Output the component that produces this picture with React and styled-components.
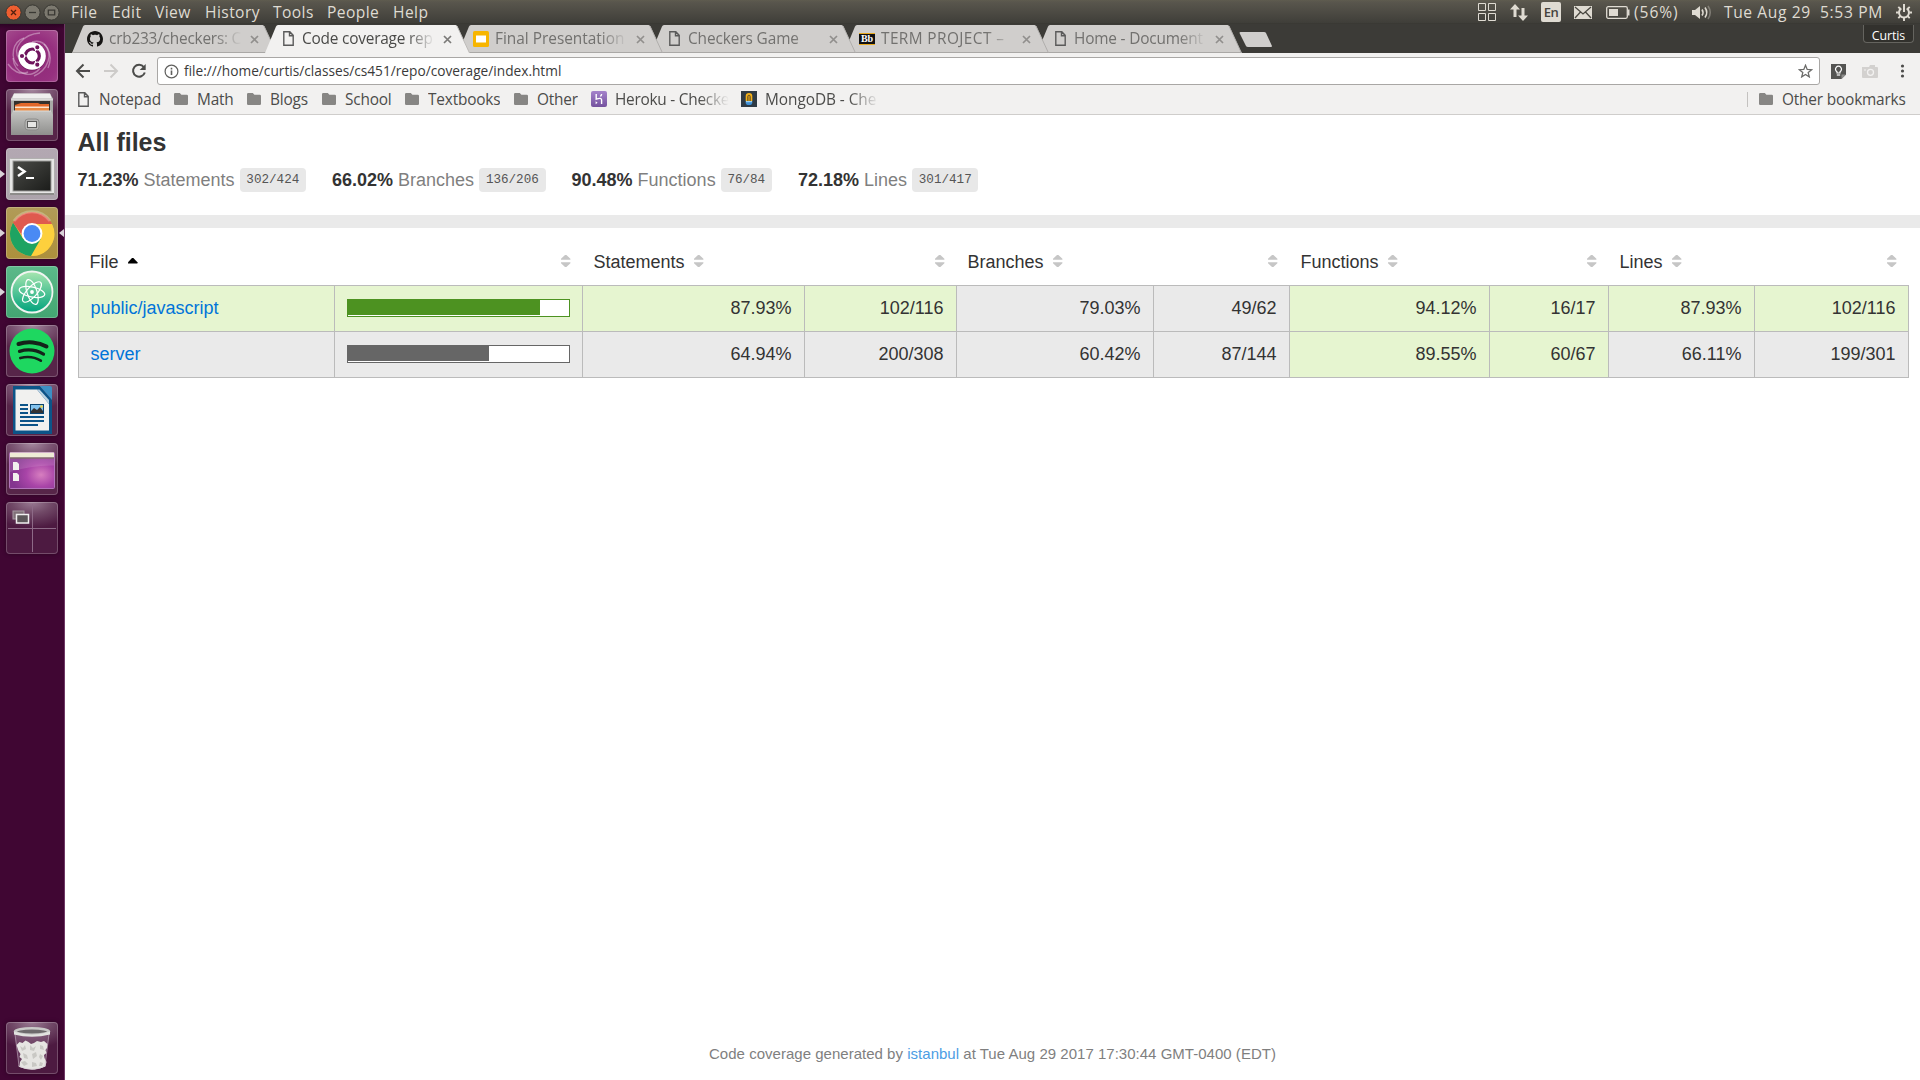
import React from "react";
import styled, { createGlobalStyle, css } from "styled-components";

const ui = `"Open Sans", "Noto Sans", sans-serif`;

const GlobalStyle = createGlobalStyle`
  html, body { margin: 0; padding: 0; background: #fff; }
  *, *::before, *::after { box-sizing: border-box; }
  svg { display: block; flex: none; }
`;

const Desktop = styled.div`
  width: 1920px;
  height: 1080px;
  overflow: hidden;
  display: flex;
  flex-direction: column;
  font-family: ${ui};
`;

/* ---------- top panel ---------- */
const Panel = styled.header`
  height: 24px;
  flex: none;
  display: flex;
  align-items: center;
  background: linear-gradient(#5f5c4f 0, #59564d 2px, #3f3e39 23px, #35342f 24px);
  color: #dfdbd2;
  font-size: 15.6px;
  line-height: 24px;
  white-space: pre;
`;
const WindowButtons = styled.div`
  display: flex;
  gap: 2px;
  width: 71px;
  padding-left: 5px;
`;
const PanelItem = styled.span`
  width: ${(p) => p.$w}px;
  letter-spacing: ${(p) => p.$ls ?? 0.42}px;
  flex: none;
`;
const PanelSpacer = styled.div`
  flex: 1;
`;
const PanelIcon = styled.span`
  width: ${(p) => p.$w}px;
  flex: none;
  display: flex;
  align-items: center;
`;
const Keyboard = styled.span`
  width: 20px;
  height: 20px;
  border-radius: 2px;
  background: #dfdbd2;
  color: #45433d;
  font-size: 13px;
  font-weight: 600;
  line-height: 21px;
  text-align: center;
  letter-spacing: -0.6px;
`;

/* ---------- launcher ---------- */
const Body = styled.div`
  flex: 1;
  display: flex;
  min-height: 0;
`;
const Launcher = styled.nav`
  width: 65px;
  flex: none;
  display: flex;
  flex-direction: column;
  gap: 7px;
  padding: 6px 0;
  background: linear-gradient(#2c0324 0, #400633 5px, #400633 100%);
  border-right: 1px solid #6f3865;
`;
const LauncherRow = styled.div`
  display: flex;
  align-items: center;
  height: 52px;
  flex: none;
  ${(p) => p.$last && css`margin-top: auto;`}
`;
const Pip = styled.span`
  width: 5px;
  height: 8px;
  margin-right: ${(p) => (p.$right ? 0 : 1)}px;
  margin-left: ${(p) => (p.$right ? 1 : 0)}px;
  background: ${(p) => (p.$on ? "#d9d2d8" : "transparent")};
  clip-path: ${(p) =>
    p.$right ? "polygon(100% 0, 0 50%, 100% 100%)" : "polygon(0 0, 100% 50%, 0 100%)"};
`;
const Tile = styled.div`
  width: 52px;
  height: 52px;
  border-radius: 4px;
  overflow: hidden;
  background: ${(p) => p.$bg || "radial-gradient(ellipse 42px 26px at 50% 0, #a68aa0 0, #7c5674 45%, #572549 100%)"};
  box-shadow: inset 0 0 0 1px rgba(255, 255, 255, 0.22), 0 0 4px rgba(0, 0, 0, 0.35);
`;

/* ---------- browser ---------- */
const Browser = styled.main`
  flex: 1;
  min-width: 0;
  display: flex;
  flex-direction: column;
  background: #fff;
`;
const TabStrip = styled.div`
  height: 29px;
  flex: none;
  display: flex;
  padding: 1px 6px 0 7px;
  background: #3c3b37;
  position: relative;
`;
const TabBox = styled.div`
  position: relative;
  z-index: ${(p) => p.$z};
  width: 205px;
  height: 28px;
  margin-right: -12px;
  padding: 0 14px 0 15px;
  flex: none;
  display: flex;
  align-items: center;
`;
const TabShape = styled.svg`
  position: absolute;
  inset: 0;
`;
const TabIcon = styled.span`
  position: relative;
  width: 16px;
  height: 16px;
  margin-right: 6px;
  display: flex;
  justify-content: center;
`;
const TabTitle = styled.span`
  position: relative;
  width: 133px;
  height: 27px;
  line-height: 25px;
  font-size: 15.4px;
  letter-spacing: ${(p) => p.$ls ?? -0.3}px;
  overflow: hidden;
  white-space: pre;
  color: ${(p) => (p.$active ? "#4a4a48" : "#72716f")};
  mask-image: linear-gradient(90deg, #000 105px, transparent 133px);
`;
const TabClose = styled.svg`
  position: relative;
  margin-left: 7.5px;
`;
const NewTab = styled.svg`
  margin: 7px 0 0 9px;
`;
const Profile = styled.div`
  margin-left: auto;
  width: 51px;
  height: 18px;
  border: 1px solid #65645f;
  border-top: 0;
  border-radius: 0 0 4px 4px;
  background: #32312d;
  color: #fff;
  font-size: 12.4px;
  line-height: 21px;
  text-align: center;
  letter-spacing: -0.1px;
`;
const Toolbar = styled.div`
  height: 33px;
  flex: none;
  display: flex;
  align-items: center;
  padding: 3px 0 0 10px;
  background: #f2f1f0;
`;
const NavButton = styled.span`
  width: ${(p) => p.$w ?? 28}px;
  display: flex;
`;
const Omnibox = styled.div`
  width: 1663px;
  height: 28px;
  display: flex;
  align-items: center;
  border: 1px solid #a9a7a5;
  border-radius: 3px;
  background: #fff;
  padding: 0 6px;
`;
const Url = styled.span`
  flex: 1;
  margin-left: 5px;
  font-size: 13.7px;
  line-height: 24px;
  letter-spacing: 0;
  color: #3a3a3a;
`;
const Extensions = styled.div`
  display: flex;
  align-items: center;
  padding-left: 11px;
`;
const Bookmarks = styled.div`
  height: 29px;
  flex: none;
  display: flex;
  align-items: center;
  padding: 0 14px 2px 13px;
  background: #f2f1f0;
  border-bottom: 1px solid #cfcdcb;
`;
const Bookmark = styled.span`
  width: ${(p) => p.$w}px;
  flex: none;
  display: flex;
  align-items: center;
  gap: ${(p) => p.$gap ?? 9}px;
`;
const BookmarkText = styled.span`
  font-size: 15.4px;
  height: 24px;
  line-height: 25px;
  letter-spacing: ${(p) => p.$ls ?? -0.18}px;
  color: #4c4c4a;
  white-space: pre;
  overflow: hidden;
  ${(p) =>
    p.$fade &&
    css`
      width: 114px;
      mask-image: linear-gradient(90deg, #000 84px, transparent 114px);
    `}
`;
const BookmarkDivider = styled.span`
  width: 1px;
  height: 15px;
  margin: 0 11px 0 auto;
  background: #c4c2c0;
`;

/* ---------- coverage report ---------- */
const Page = styled.article`
  flex: 1;
  display: flex;
  flex-direction: column;
  font-family: "Liberation Sans", Arial, sans-serif;
  font-size: 18px;
  line-height: 22px;
  color: #333;
`;
const Summary = styled.section`
  height: 100px;
  padding: 13px 12.5px;
`;
const Title = styled.h1`
  margin: 0;
  font-size: 25px;
  line-height: 29px;
  font-weight: 700;
`;
const Metrics = styled.div`
  display: flex;
  gap: 26px;
  margin-top: 11px;
`;
const Metric = styled.div`
  display: flex;
  align-items: center;
  gap: 5px;
  height: 24px;
`;
const Quiet = styled.span`
  color: #7f7f7f;
`;
const Fraction = styled.span`
  height: 24px;
  padding: 0 6.75px;
  border-radius: 4px;
  background: #e8e8e8;
  color: #555;
  font: 12.6px/25px "Liberation Mono", monospace;
`;
const StatusLine = styled.div`
  height: 13px;
  background: #eaeaea;
`;
const CoverageTable = styled.table`
  width: 1831px;
  margin: 10px 0 0 13px;
  table-layout: fixed;
  border-collapse: separate;
  border-spacing: 0;
`;
const HeadCell = styled.th`
  height: 48px;
  padding: ${(p) => (p.$tail ? "0 11.5px 1px 0" : "0 0 1px 11.5px")};
  border-bottom: 1px solid #bbb;
  font-weight: 400;
  text-align: left;
  &:last-child {
    padding-right: 12.5px;
  }
`;
const HeadInner = styled.div`
  display: flex;
  align-items: center;
  justify-content: ${(p) => (p.$tail ? "flex-end" : "flex-start")};
  gap: 9px;
`;
const HeadLabel = styled.span`
  padding-top: 1px;
  margin-bottom: -1px;
`;
const levels = { high: "#e6f5d0", medium: "#eaeaea" };
const Cell = styled.td`
  height: 46px;
  padding: 0 12.5px 2px 11.5px;
  text-align: ${(p) => (p.$left ? "left" : "right")};
  background: ${(p) => levels[p.$level]};
  border: solid #bbb;
  border-width: 0 0 1px 1px;
  ${(p) =>
    p.$chart &&
    css`
      padding: 0 12px 1px;
    `}
  &:last-child {
    border-right-width: 1px;
  }
`;
const FileLink = styled.a`
  color: ${(p) => (p.$soft ? "#4c9de4" : "#0074d9")};
`;
const Bar = styled.div`
  height: 18px;
  border: 1px solid ${(p) => p.$color};
  background: #fff;
`;
const BarFill = styled.div`
  height: 15px;
  background: ${(p) => p.$color};
`;
const Footer = styled.footer`
  margin-top: auto;
  height: 53px;
  padding-top: 16px;
  text-align: center;
  font-size: 15px;
  line-height: 22px;
  letter-spacing: 0.02px;
  color: #7f7f7f;
`;

/* ---------- drawings ---------- */
const WinButton = ({ kind }) => (
  <svg width="17" height="17" viewBox="0 0 17 17">
    <circle cx="8.5" cy="8.5" r="7.6" fill={kind === "x" ? "#ee5e30" : "#7c796f"} stroke="#3a3934" strokeWidth="1" />
    <g stroke={kind === "x" ? "#53200f" : "#3a3934"} strokeWidth="1.3" fill="none">
      {kind === "x" && <path d="M6 6l5 5M11 6l-5 5" />}
      {kind === "min" && <path d="M5 8.5h7" />}
      {kind === "max" && <path d="M5.3 6.2h6.4v4.6H5.3z" />}
    </g>
  </svg>
);

const DocIcon = () => (
  <svg width="11" height="15" viewBox="0 0 11 15">
    <path d="M.8.8h6l3.4 3.6v9.8H.8zM6.5.8v4h3.7" fill="none" stroke="#5a5a5a" strokeWidth="1.4" />
  </svg>
);
const Folder = () => (
  <svg width="14" height="12" viewBox="0 0 14 12">
    <path d="M1.2 0h4.6l1.6 1.8h5.4Q14 1.8 14 3v7.8Q14 12 12.8 12H1.2Q0 12 0 10.8V1.2Q0 0 1.2 0z" fill="#878684" />
  </svg>
);
const Github = () => (
  <svg width="16" height="16" viewBox="0 0 16 16">
    <path
      fill="#161514"
      d="M8 0C3.58 0 0 3.58 0 8c0 3.54 2.29 6.53 5.47 7.59.4.07.55-.17.55-.38 0-.19-.01-.82-.01-1.49-2.01.37-2.53-.49-2.69-.94-.09-.23-.48-.94-.82-1.13-.28-.15-.68-.52-.01-.53.63-.01 1.08.58 1.23.82.72 1.21 1.87.87 2.33.66.07-.52.28-.87.51-1.07-1.78-.2-3.64-.89-3.64-3.95 0-.87.31-1.59.82-2.15-.08-.2-.36-1.02.08-2.12 0 0 .67-.21 2.2.82.64-.18 1.32-.27 2-.27s1.36.09 2 .27c1.53-1.04 2.2-.82 2.2-.82.44 1.1.16 1.92.08 2.12.51.56.82 1.27.82 2.15 0 3.07-1.87 3.75-3.65 3.95.29.25.54.73.54 1.48 0 1.07-.01 1.93-.01 2.2 0 .21.15.46.55.38A8.01 8.01 0 0 0 16 8c0-4.42-3.58-8-8-8z"
    />
  </svg>
);
const Slides = () => (
  <svg width="16" height="16" viewBox="0 0 16 16">
    <rect width="16" height="16" rx="1.6" fill="#f7b500" />
    <rect x="3" y="4.5" width="10" height="7" fill="#fff" />
  </svg>
);
const BbBadge = styled.span`
  width: 16px;
  height: 12px;
  margin-top: 2px;
  background: #111;
  border: solid #e8a81c;
  border-width: 1px 0 1px 0;
  color: #fff;
  font: 700 10px/10px "Liberation Serif", serif;
  letter-spacing: -0.2px;
  text-align: center;
`;

const HerokuIcon = () => (
  <svg width="16" height="16" viewBox="0 0 16 16">
    <defs>
      <linearGradient id="hk" x1="0" y1="0" x2="0" y2="1">
        <stop offset="0" stopColor="#a583cb" />
        <stop offset="1" stopColor="#74529e" />
      </linearGradient>
    </defs>
    <rect width="16" height="16" rx="2" fill="url(#hk)" />
    <path d="M5.2 3v5.2c3.6-1.3 5.4-1.1 5.4.8V13M10.6 3c0 1-.5 1.8-1.2 2.4" fill="none" stroke="#fff" strokeWidth="1.4" />
    <path d="M4.6 10.2l2 1.5-2 1.5z" fill="#fff" />
  </svg>
);
const MongoIcon = () => (
  <svg width="16" height="16" viewBox="0 0 16 16">
    <rect width="16" height="16" fill="#2f3b45" />
    <path d="M4.7 10V5.3a3.3 3.3 0 0 1 6.6 0V10z" fill="#f5b21a" />
    <path d="M6.6 10V5.6a1.4 1.4 0 0 1 2.8 0V10M8 4.5V10" fill="none" stroke="#4a3d22" strokeWidth=".7" />
    <path d="M4.7 10h6.6v1.4a3.3 2.6 0 0 1-6.6 0z" fill="#3f8fd4" />
    <path d="M5 10h6v1.2H5z" fill="#9ed0f0" />
  </svg>
);

const Sorter = ({ up }) => (
  <svg width="10" height="12" viewBox="0 0 10 12">
    {up ? (
      <path d="M0 8.4V7.3L4 3h1.4L9.4 7.3v1.1z" fill="#000" />
    ) : (
      <path d="M0 4.8v-1L4 0h1.4L9.4 3.8v1zM0 7.2v1L4 12h1.4l4-3.8v-1z" fill="#c6c6c6" />
    )}
  </svg>
);

const Art = ({ children }) => (
  <svg width="52" height="52" viewBox="0 0 52 52">
    {children}
  </svg>
);
const UbuntuArt = () => (
  <Art>
    <g fill="none" stroke="#fff" strokeOpacity=".35" strokeWidth="1.4">
      <path d="M26 12C40 8 48 24 42 38" />
      <path d="M14 30C4 18 18 4 34 3" />
      <path d="M34 38C26 50 8 44 7 28" />
      <path d="M38 14c10 10 4 26-10 32" />
      <path d="M12 36C4 28 6 12 18 8" />
      <path d="M22 42C14 46 6 40 2 34" />
    </g>
    <circle cx="26" cy="26.5" r="14.2" fill="#561048" opacity=".4" />
    <circle cx="26" cy="26" r="13.8" fill="#fff" />
    <circle cx="26.3" cy="26" r="7" fill="none" stroke="#6f145d" strokeWidth="3.2" />
    <g stroke="#fff" strokeWidth="1.2" fill="#6f145d">
      <path d="M26.3 26L14 26M26.3 26L32.5 15.3M26.3 26L32.5 36.7" strokeWidth="1" />
      <circle cx="26.3" cy="26" r="4.8" fill="#fff" stroke="none" />
      <circle cx="16" cy="26" r="2.7" />
      <circle cx="31.3" cy="17.3" r="2.7" />
      <circle cx="31.3" cy="34.7" r="2.7" />
    </g>
  </Art>
);
const FilesArt = () => (
  <Art>
    <defs>
      <linearGradient id="fl" x1="0" y1="0" x2="0" y2="1">
        <stop offset="0" stopColor="#c4c4c2" />
        <stop offset="1" stopColor="#8f8f8d" />
      </linearGradient>
    </defs>
    <path d="M8 4.5h36l3 5v34H5v-34z" fill="#a9a9a7" />
    <path d="M8 4.5h36l2 5H6z" fill="#efefee" />
    <path d="M5 9.5h42v2H5z" fill="#dadad9" />
    <path d="M8 12h36v10H8z" fill="#33302e" />
    <path d="M9 16l6-2h17l2 1h9v7H9z" fill="#e2672a" />
    <path d="M9 17.5h34V19H9z" fill="#fbe3cf" />
    <path d="M9 19h34v3H9z" fill="#e98943" />
    <path d="M7 22h38l2 4v20H5V26z" fill="url(#fl)" />
    <path d="M7 22h38" stroke="#dcdcda" />
    <rect x="19" y="30" width="14" height="11" rx="3" fill="#b5b5b3" stroke="#8c8c8a" />
    <rect x="21.5" y="32.5" width="9" height="6" fill="#e6e6e4" stroke="#5d5d5b" />
  </Art>
);
const TerminalArt = () => (
  <Art>
    <defs>
      <linearGradient id="tm" x1="0" y1="0" x2="1" y2="1">
        <stop offset="0" stopColor="#4b4c48" />
        <stop offset="1" stopColor="#1b1c1a" />
      </linearGradient>
    </defs>
    <rect x="3.5" y="10.5" width="45" height="36" rx="1" fill="#e6e6e5" stroke="#b1b0af" />
    <path d="M4 46h44" stroke="#8d8c8a" strokeWidth="2" />
    <rect x="7" y="13" width="38" height="30" fill="url(#tm)" stroke="#9a9a98" />
    <path d="M12 19l6.5 4.5L12 28" fill="none" stroke="#fff" strokeWidth="2.5" />
    <path d="M20 30h8" stroke="#fff" strokeWidth="2" />
  </Art>
);
const ChromeArt = () => (
  <Art>
    <circle cx="26" cy="27" r="22" fill="#fc3" />
    <path d="M26 17h20a22 22 0 0 1-21 31.8L34.7 32z" fill="#fdd03d" />
    <path d="M7.2 15.6A22 22 0 0 0 25 49l9.7-17-17.5 0z" fill="#1ea362" />
    <path d="M16.5 29L7 15.8C10 10.5 17 5 26 5c9 0 17 5 20 12H26z" fill="#df5a4e" />
    <circle cx="26" cy="26.5" r="10.4" fill="#fff" />
    <circle cx="26" cy="26.5" r="8.4" fill="#4a8af4" />
    <path d="M8 14a22 22 0 0 1 36 0" fill="none" stroke="#fff" strokeOpacity=".25" strokeWidth="3" />
  </Art>
);
const AtomArt = () => (
  <Art>
    <defs>
      <linearGradient id="at" x1="0" y1="0" x2="0" y2="1">
        <stop offset="0" stopColor="#a8e6b0" />
        <stop offset="1" stopColor="#00a37c" />
      </linearGradient>
    </defs>
    <circle cx="26" cy="26" r="20.5" fill="url(#at)" stroke="#f1f5f1" strokeWidth="1.8" />
    <g fill="none" stroke="#fff" strokeWidth="1.2">
      <ellipse cx="26" cy="26" rx="13" ry="5" transform="rotate(12 26 26)" />
      <ellipse cx="26" cy="26" rx="13" ry="5" transform="rotate(72 26 26)" />
      <ellipse cx="26" cy="26" rx="13" ry="5" transform="rotate(132 26 26)" />
    </g>
    <circle cx="26" cy="26" r="1.9" fill="#fff" />
  </Art>
);
const SpotifyArt = () => (
  <Art>
    <circle cx="26" cy="26" r="22.5" fill="#1ed760" />
    <g fill="none" stroke="#14241a" strokeLinecap="round">
      <path d="M12.5 19c9-3 20-2 28 2.5" strokeWidth="4" />
      <path d="M13.5 26.3c8-2.3 17-1.3 24 2.8" strokeWidth="3.3" />
      <path d="M14.3 33c7-1.8 14.5-1 20.5 2.7" strokeWidth="2.7" />
    </g>
  </Art>
);
const WriterArt = () => (
  <Art>
    <path d="M7 2h27l12 14v34H7z" fill="#0c5488" />
    <path d="M34 2h10q2 0 2 2v12z" fill="#3d8fc4" />
    <path d="M9.5 5.5h21.5l12 14.5v26.5H9.5z" fill="#f1f1ef" />
    <path d="M31 5.5l12 14.5V16L33.5 5.5z" fill="#bdd3e2" />
    <path d="M14 21h8M14 25h8M14 29h8M14 33h24M14 37h24M14 41h18" stroke="#0c5488" strokeWidth="2" />
    <rect x="24.5" y="20.5" width="13" height="9" fill="#83c3ee" stroke="#0c4470" />
    <path d="M25 29v-2l3-3 3 2 3-3 3 4v2z" fill="#333" />
    <circle cx="35.5" cy="22.5" r="1.3" fill="#f5d33c" />
  </Art>
);
const DesktopArt = () => (
  <Art>
    <defs>
      <radialGradient id="dk" cx=".7" cy=".62" r=".65">
        <stop offset="0" stopColor="#d77fc0" />
        <stop offset=".5" stopColor="#a945a8" />
        <stop offset="1" stopColor="#84358f" />
      </radialGradient>
    </defs>
    <rect x="3.5" y="9.5" width="45" height="36" rx="1" fill="url(#dk)" stroke="#b274bb" />
    <path d="M4 15.5h44v7Q26 22 4 29z" fill="#fff" opacity=".12" />
    <path d="M4 9.5h44v5H4z" fill="#eeecd6" />
    <path d="M4 15h44" stroke="#7b8058" />
    <path d="M7 19h4l2 2v6H7zM7 30h4l2 2v6H7z" fill="#f1f0ee" />
  </Art>
);
const WorkspacesArt = () => (
  <Art>
    <path d="M26.5 2v48M2 26.5h48" stroke="#8d6a87" />
    <rect x="7" y="9" width="11" height="8" fill="#807078" stroke="#a79aa3" />
    <rect x="10.5" y="12.5" width="12" height="8.5" fill="#5c5659" stroke="#f0eeef" strokeWidth="1.5" />
  </Art>
);
const TrashArt = () => (
  <Art>
    <path d="M8.5 9L13 44.5Q26 49 39 44.5L43.5 9z" fill="#a98aa4" opacity=".3" />
    <path
      d="M10.5 23l3-3 3 1 3-2.5 3 1.5 2.5 2 3-1 3-2 4 1 3-1 3.5 3-.5 4-1.5 2 1 3-2.5 2 .5 3 2 4-1 4-4 2-7 1.500-8-.5-7-2 .5-5 2-3-2.500-2 1-3-2-3z"
      fill="#e6e5e2"
    />
    <g fill="#c9c8c4">
      <path d="M14 24l3 2 2-3 1 4-4 2zM24 23l3 3 3-2-2 5-4-1zM34 23l3 1 1 4-4-1z" />
      <path d="M17 31l4 2 1 4-4-1zM26 32l4-2 1 4-4 3zM34 32l3 2-2 4-2-3z" />
      <path d="M15 40l4-1 3 3-4 2zM26 40l4 1 1 3-5 1zM34 40l3 1-1 3-3 0z" />
    </g>
    <path d="M12.5 44Q26 50.5 39.5 44" fill="none" stroke="#dcd6da" />
    <path d="M9 12L13 44M43 12L39 44" stroke="#c6b4c3" strokeOpacity=".6" />
    <ellipse cx="26" cy="9.5" rx="17" ry="3.3" fill="#6e6a6c" stroke="#c9c9c7" strokeWidth="2.6" />
    <path d="M8 9.5v3Q26 17 44 12.5v-3Q26 16 8 9.5z" fill="#e2e2df" />
  </Art>
);

/* ---------- data ---------- */
const darkTile = "radial-gradient(ellipse 44px 26px at 50% 0, #9a7b93 0, #714967 45%, #4d1a41 100%)";
const launcher = [
  { art: UbuntuArt, bg: "radial-gradient(circle at 50% 60%, #8e2a77 0, #96307f 60%, #a54d8e 100%)" },
  { art: FilesArt },
  { art: TerminalArt, left: true, bg: "linear-gradient(#b3a8b2, #aca3ab)" },
  { art: ChromeArt, left: true, right: true, bg: "linear-gradient(#b19b58, #ac903c)" },
  { art: AtomArt, left: true, bg: "linear-gradient(#5cb98a, #43a672)" },
  { art: SpotifyArt },
  { art: WriterArt },
  { art: DesktopArt },
  { art: WorkspacesArt, bg: darkTile },
  { art: TrashArt, last: true, bg: darkTile },
];
const menus = [["File", 41], ["Edit", 43], ["View", 50], ["History", 68], ["Tools", 54], ["People", 66], ["Help", 60]];
const tabs = [
  { title: "crb233/checkers: C", icon: Github, ls: -0.22 },
  { title: "Code coverage rep", icon: DocIcon, active: true, ls: -0.2 },
  { title: "Final Presentation", icon: Slides, ls: 0 },
  { title: "Checkers Game", icon: DocIcon, ls: -0.1 },
  { title: "TERM PROJECT –", icon: () => <BbBadge>Bb</BbBadge>, ls: 0.4 },
  { title: "Home - Document", icon: DocIcon, ls: -0.18 },
];
const folders = [["Math", 73], ["Blogs", 75], ["School", 83], ["Textbooks", 109], ["Other", 77]];
const metrics = [
  ["71.23%", "Statements", "302/424"],
  ["66.02%", "Branches", "136/206"],
  ["90.48%", "Functions", "76/84"],
  ["72.18%", "Lines", "301/417"],
];
const columns = [256, 248, 222, 152, 197, 136, 200, 119, 146, 155];
const headings = ["File", null, "Statements", null, "Branches", null, "Functions", null, "Lines", null];
const rows = [
  {
    file: "public/javascript", level: "high", color: "#4d9221", covered: 87,
    cells: [["87.93%", "high"], ["102/116", "high"], ["79.03%", "medium"], ["49/62", "medium"],
      ["94.12%", "high"], ["16/17", "high"], ["87.93%", "high"], ["102/116", "high"]],
  },
  {
    file: "server", level: "medium", color: "#666", covered: 64,
    cells: [["64.94%", "medium"], ["200/308", "medium"], ["60.42%", "medium"], ["87/144", "medium"],
      ["89.55%", "high"], ["60/67", "high"], ["66.11%", "medium"], ["199/301", "medium"]],
  },
];

const Tab = ({ title, icon: Icon, active, z, ls }) => (
  <TabBox $z={active ? 20 : z}>
    <TabShape width="205" height="28" viewBox="0 0 205 28">
      <path d="M0 28L11 1.5Q11.6 0 13 0H190.5Q191.8 0 192.4 1.5L204.5 28z" fill={active ? "#f2f1f0" : "#d0cecc"} />
      <path d="M192 1L204.5 28" stroke={active ? "#bdbbb9" : "#b0aeac"} strokeWidth="1" />
      {!active && <path d="M0 27.5H204.5" stroke="#aaa8a6" />}
    </TabShape>
    <TabIcon><Icon /></TabIcon>
    <TabTitle $active={active} $ls={ls}>{title}</TabTitle>
    <TabClose width="9" height="9" viewBox="0 0 9 9">
      <path d="M1 1l7 7M8 1L1 8" stroke={active ? "#7b7a78" : "#918f8d"} strokeWidth="1.7" />
    </TabClose>
  </TabBox>
);

export default function App() {
  return (
    <Desktop>
      <GlobalStyle />
      <Panel>
        <WindowButtons>
          <WinButton kind="x" /><WinButton kind="min" /><WinButton kind="max" />
        </WindowButtons>
        {menus.map(([label, w]) => <PanelItem key={label} $w={w}>{label}</PanelItem>)}
        <PanelSpacer />
        <PanelIcon $w={32}>
          <svg width="18" height="18" viewBox="0 0 18 18" fill="none" stroke="#dfdbd2">
            <path d="M.5 .5h7v7h-7zM10.5 .5h7v7h-7zM.5 10.5h7v7h-7zM10.5 10.5h7v7h-7z" />
          </svg>
        </PanelIcon>
        <PanelIcon $w={31}>
          <svg width="18" height="17" viewBox="0 0 18 17" fill="#dfdbd2">
            <path d="M5 0l5 5.5H6.5V13h-3V5.5H0zM13 17l5-5.5h-3.5V4h-3v7.5H8z" />
          </svg>
        </PanelIcon>
        <PanelIcon $w={33}><Keyboard>En</Keyboard></PanelIcon>
        <PanelIcon $w={32}>
          <svg width="18" height="13" viewBox="0 0 18 13">
            <rect width="18" height="13" fill="#dfdbd2" />
            <path d="M1 1l8 7 8-7M1 12l5.5-6M17 12l-5.5-6" fill="none" stroke="#4a4841" strokeWidth="1.3" />
          </svg>
        </PanelIcon>
        <PanelIcon $w={28}>
          <svg width="24" height="13" viewBox="0 0 24 13">
            <rect x=".7" y=".7" width="20.6" height="11.6" rx="1.5" fill="none" stroke="#dfdbd2" strokeWidth="1.3" />
            <rect x="3" y="3" width="9" height="7" fill="#dfdbd2" />
            <path d="M22.7 3.5v6" stroke="#dfdbd2" strokeWidth="1.6" />
          </svg>
        </PanelIcon>
        <PanelItem $w={58} $ls={0.95}>(56%)</PanelItem>
        <PanelIcon $w={32}>
          <svg width="20" height="15" viewBox="0 0 20 15" fill="none" stroke="#dfdbd2" strokeWidth="1.6">
            <path d="M0 5h3l5-4v13l-5-4H0z" fill="#dfdbd2" stroke="none" />
            <path d="M10 4.5q2 3 0 6M13 2.5q3.5 5 0 10" />
            <path d="M16 1q4.5 6.5 0 13" strokeOpacity=".35" />
          </svg>
        </PanelIcon>
        <PanelItem $w={96} $ls={0.6}>Tue Aug 29</PanelItem>
        <PanelItem $w={76} $ls={0.65}>5:53 PM</PanelItem>
        <PanelIcon $w={24}>
          <svg width="16" height="17" viewBox="0 0 16 17" fill="none" stroke="#dfdbd2">
            <path d="M5.3 4.3a5 5 0 1 0 5.4 0" strokeWidth="2" />
            <path d="M8 0v8" strokeWidth="2" />
            <path d="M0 8.5h2.5M13.5 8.5H16M2.3 2.8l2 2M13.7 2.8l-2 2M2.3 14.2l2-2M13.7 14.2l-2-2M8 14v3" strokeWidth="1.9" />
          </svg>
        </PanelIcon>
      </Panel>
      <Body>
        <Launcher>
          {launcher.map(({ art: ArtPiece, bg, left, right, last }, i) => (
            <LauncherRow key={i} $last={last}>
              <Pip $on={left} />
              <Tile $bg={bg}><ArtPiece /></Tile>
              <Pip $right $on={right} />
            </LauncherRow>
          ))}
        </Launcher>
        <Browser>
          <TabStrip>
            {tabs.map((t, i) => <Tab key={t.title} {...t} z={10 - i} />)}
            <NewTab width="34" height="16" viewBox="0 0 34 16">
              <path d="M1.5 0H25Q26.5 0 27 1L33 14Q33 15 32 15H9Q7.5 15 7 14L.5 1Q.5 0 1.5 0z" fill="#d0cecc" />
            </NewTab>
            <Profile>Curtis</Profile>
          </TabStrip>
          <Toolbar>
            <NavButton>
              <svg width="16" height="16" viewBox="0 0 16 16" fill="none" stroke="#4c4c4a" strokeWidth="2">
                <path d="M15 8H2.5M8.5 1.5L2 8l6.5 6.5" />
              </svg>
            </NavButton>
            <NavButton>
              <svg width="16" height="16" viewBox="0 0 16 16" fill="none" stroke="#cdcbc9" strokeWidth="2">
                <path d="M1 8h12.5M7.5 1.5L14 8l-6.5 6.5" />
              </svg>
            </NavButton>
            <NavButton $w={26}>
              <svg width="16" height="16" viewBox="0 0 16 16" fill="none" stroke="#4c4c4a" strokeWidth="2">
                <path d="M12.8 4A6 6 0 1 0 13.8 9.5" />
                <path d="M14.7 1v6h-6z" fill="#4c4c4a" stroke="none" />
              </svg>
            </NavButton>
            <Omnibox>
              <svg width="15" height="15" viewBox="0 0 15 15" fill="none" stroke="#5f5f5d">
                <circle cx="7.5" cy="7.5" r="6.4" strokeWidth="1.2" />
                <path d="M7.5 6.5V11M7.5 3.8v1.6" strokeWidth="1.6" />
              </svg>
              <Url>file:///home/curtis/classes/cs451/repo/coverage/index.html</Url>
              <svg width="15" height="14" viewBox="0 0 15 14" fill="none" stroke="#6b6b69" strokeWidth="1.3">
                <path d="M7.5 1.3l1.7 4.1 4.5.3-3.5 2.9 1.1 4.3-3.8-2.4-3.8 2.4 1.1-4.3L1.3 5.7l4.5-.3z" />
              </svg>
            </Omnibox>
            <Extensions>
              <svg width="15" height="15" viewBox="0 0 15 15">
                <path d="M0 0h15v10.5L10.5 15H0z" fill="#545452" />
                <path d="M15 10.5h-4.5V15z" fill="#8e8e8c" />
                <path d="M6 9V7.8a3 3 0 1 1 3 0V9z" fill="none" stroke="#fff" strokeWidth="1.2" />
                <path d="M5.8 11h3.4" stroke="#fff" strokeWidth="1.2" />
              </svg>
              <svg width="49" height="13" viewBox="1 0 49 13">
                <path d="M17 2h7l1-2h5v2h2q1 0 1 1v9q0 1-1 1H18q-1 0-1-1z" fill="#d3d1cf" />
                <circle cx="25.5" cy="7.3" r="3" fill="none" stroke="#f2f1f0" strokeWidth="1.3" />
                <path d="M19 5h2" stroke="#f2f1f0" />
              </svg>
              <svg width="14" height="14" viewBox="0 0 14 14" fill="#4c4c4a">
                <circle cx="7.5" cy="2" r="1.6" /><circle cx="7.5" cy="7" r="1.6" /><circle cx="7.5" cy="12" r="1.6" />
              </svg>
            </Extensions>
          </Toolbar>
          <Bookmarks>
            <Bookmark $w={96} $gap={10}><DocIcon /><BookmarkText $ls={-0.05}>Notepad</BookmarkText></Bookmark>
            {folders.map(([label, w]) => (
              <Bookmark key={label} $w={w}><Folder /><BookmarkText>{label}</BookmarkText></Bookmark>
            ))}
            <Bookmark $w={150} $gap={8}><HerokuIcon /><BookmarkText $fade $ls={-0.25}>Heroku - Checke</BookmarkText></Bookmark>
            <Bookmark $w={150} $gap={8}><MongoIcon /><BookmarkText $fade $ls={-0.05}>MongoDB - Che</BookmarkText></Bookmark>
            <BookmarkDivider />
            <Bookmark $w={147}><Folder /><BookmarkText>Other bookmarks</BookmarkText></Bookmark>
          </Bookmarks>
          <Page>
            <Summary>
              <Title>All files</Title>
              <Metrics>
                {metrics.map(([pct, label, frac]) => (
                  <Metric key={label}>
                    <strong>{pct}</strong><Quiet>{label}</Quiet><Fraction>{frac}</Fraction>
                  </Metric>
                ))}
              </Metrics>
            </Summary>
            <StatusLine />
            <CoverageTable>
              <colgroup>{columns.map((w, i) => <col key={i} width={w} />)}</colgroup>
              <thead>
                <tr>
                  {headings.map((h, i) => (
                    <HeadCell key={i} $tail={!h}>
                      <HeadInner $tail={!h}>
                        {h && <HeadLabel>{h}</HeadLabel>}
                        <Sorter up={h === "File"} />
                      </HeadInner>
                    </HeadCell>
                  ))}
                </tr>
              </thead>
              <tbody>
                {rows.map((r) => (
                  <tr key={r.file}>
                    <Cell $left $level={r.level}><FileLink>{r.file}</FileLink></Cell>
                    <Cell $left $chart $level={r.level}>
                      <Bar $color={r.color}><BarFill $color={r.color} style={{ width: `${r.covered}%` }} /></Bar>
                    </Cell>
                    {r.cells.map(([text, level], i) => <Cell key={i} $level={level}>{text}</Cell>)}
                  </tr>
                ))}
              </tbody>
            </CoverageTable>
            <Footer>
              Code coverage generated by <FileLink $soft>istanbul</FileLink> at Tue Aug 29 2017 17:30:44 GMT-0400 (EDT)
            </Footer>
          </Page>
        </Browser>
      </Body>
    </Desktop>
  );
}
